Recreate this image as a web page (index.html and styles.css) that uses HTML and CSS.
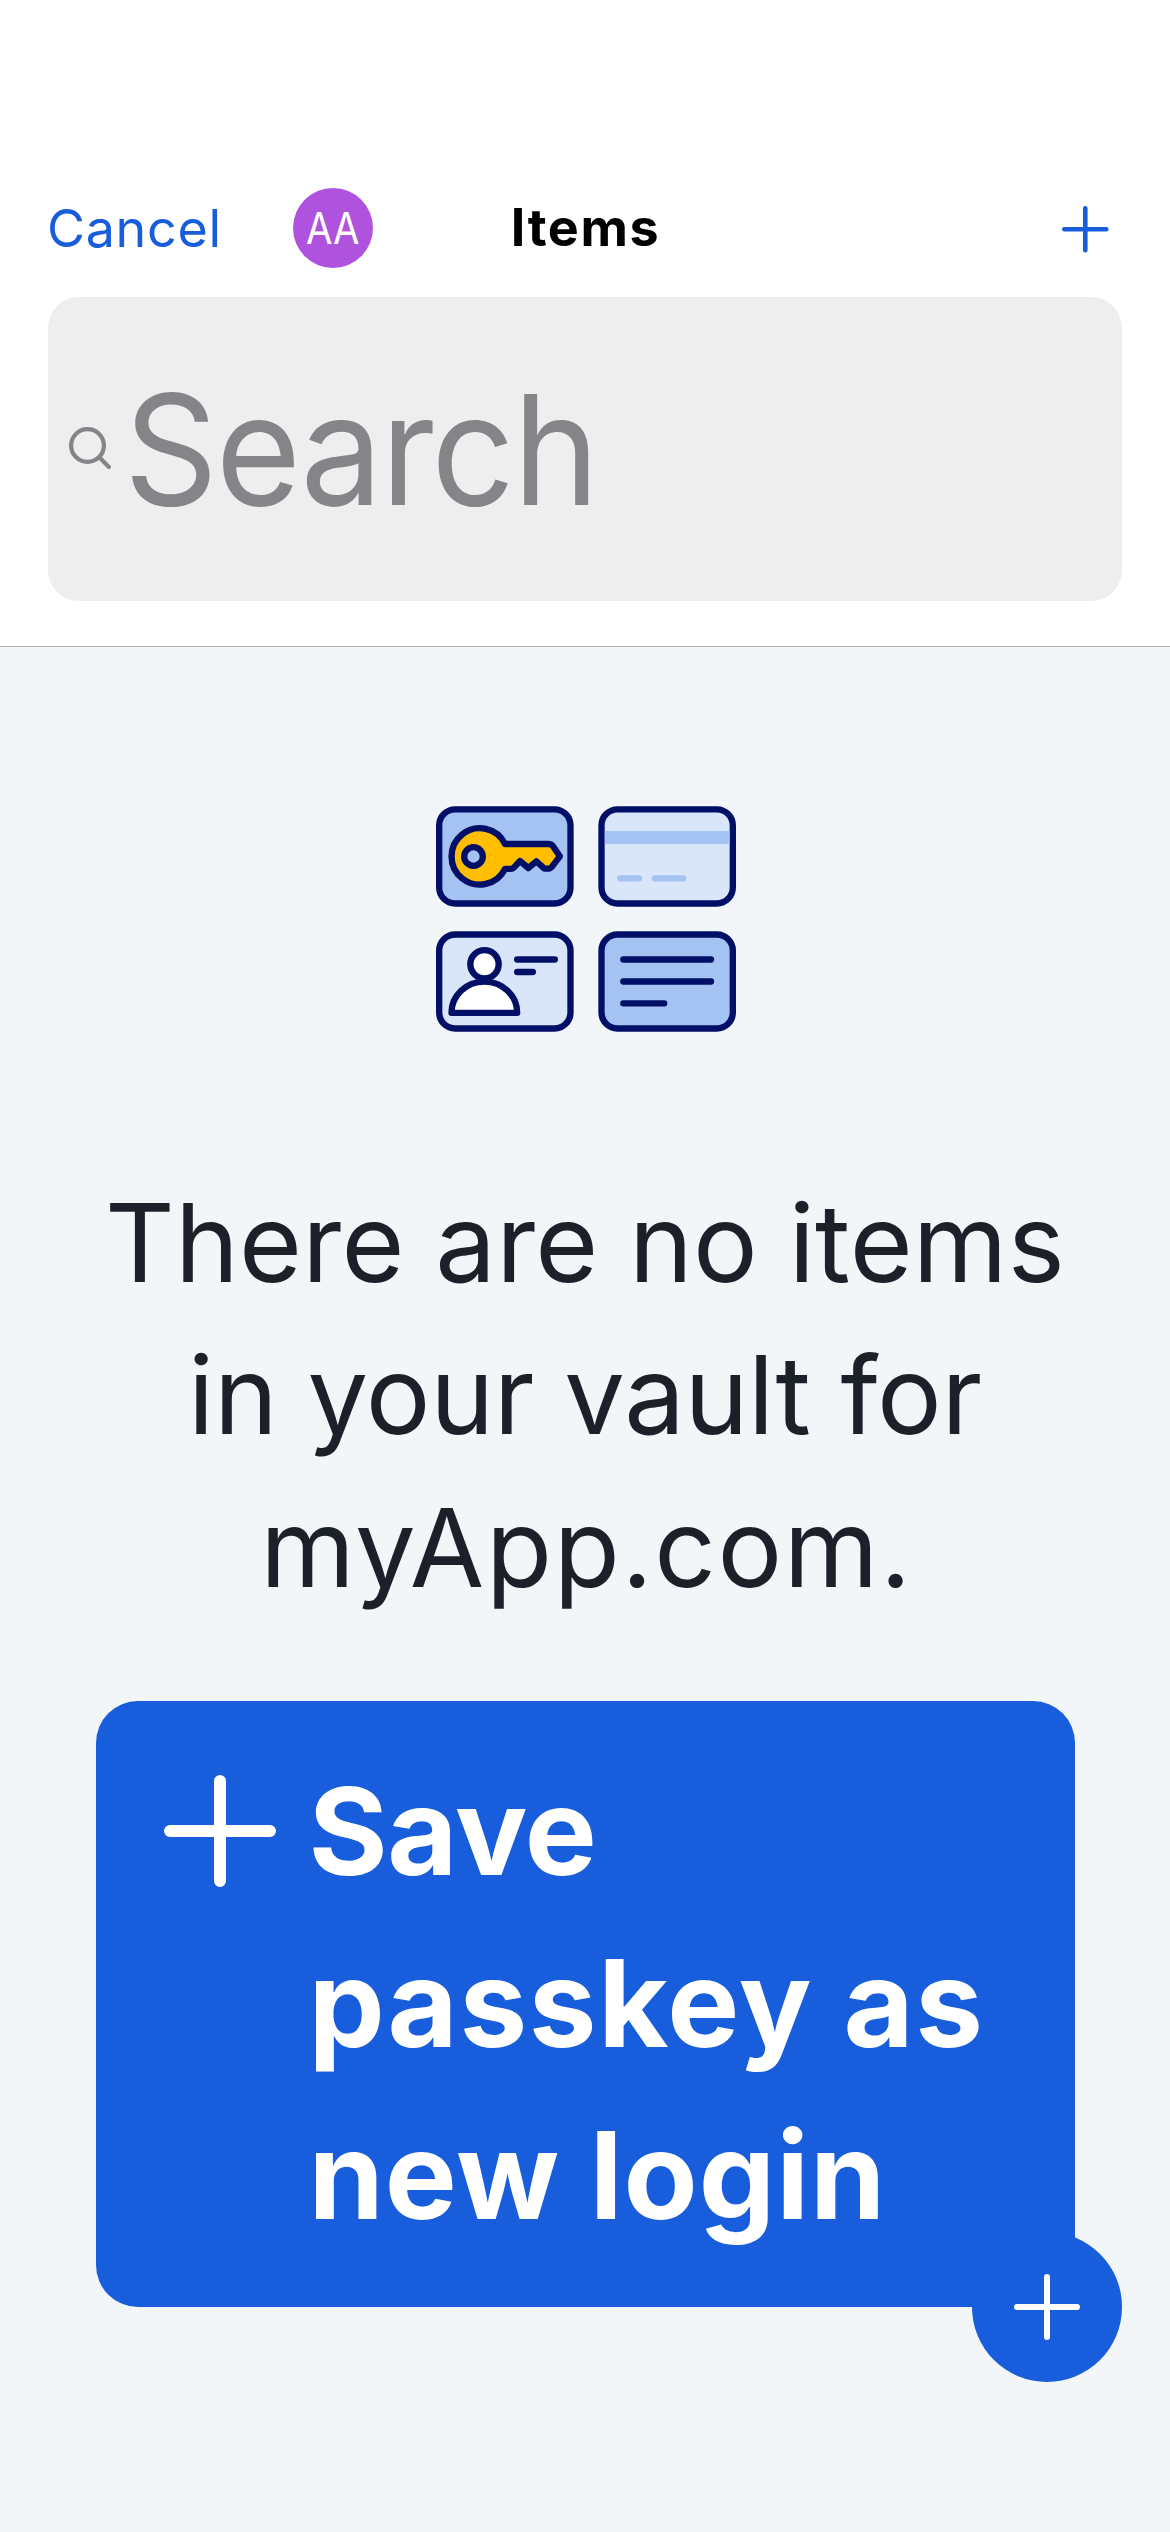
FILE: index.html
```html
<!DOCTYPE html>
<html lang="en">
<head>
  <meta charset="utf-8">
  <title>Items</title>
  <link rel="stylesheet" href="styles.css">
</head>
<body>
  <header class="header">
    <nav class="nav">
      <div class="nav-left">
        <a class="cancel">Cancel</a>
        <div class="avatar"><span class="initials">AA</span></div>
      </div>
      <h1 class="title">Items</h1>
      <svg class="nav-add" viewBox="0 0 47 47"><path d="M23.3 2.3v42M2.3 23.3h42"/></svg>
    </nav>
    <div class="search">
      <svg class="search-icon" viewBox="0 0 42 42"><circle cx="18.5" cy="18.5" r="16.4"/><path d="M30.3 30.3l9.6 9.6"/></svg>
      <span class="search-text">Search</span>
    </div>
  </header>
  <main class="main">
    <svg class="art" viewBox="45 48 900 678">
      <g class="outline">
        <rect class="mid" x="54.5" y="58" width="394" height="282.500" rx="48"/>
        <path class="gold" d="M252 162H384Q391 162 395 167L416.500 199L393 230Q388 236 380 236H374Q370 236 367 233L346 214L322 234L297 213L279 232Q275 236.500 269 236.500H252A84.500 84.500 0 1 1 252 162Z"/>
        <circle class="mid" cx="157.500" cy="199.500" r="28"/>
        <rect class="pale" x="541.500" y="58" width="394" height="282.500" rx="48"/>
        <rect class="pale" x="54.500" y="433.500" width="394" height="282" rx="48"/>
        <circle class="white" cx="190.500" cy="523" r="42.500"/>
        <path class="white" d="M91.500 668.500C91.500 617 135 575 190 575S288.500 617 288.500 668.500Z"/>
        <path d="M288.500 508.500H401.500M288.500 546H335.500"/>
        <rect class="mid" x="541.500" y="433.500" width="394" height="282" rx="48"/>
        <path d="M607 508.500H870M607 574.500H870M607 640H729.500"/>
      </g>
      <path class="stripe" d="M551.500 123H926V162H551.500Z"/>
      <path class="dashes" d="M597.500 265H654M701.500 265H786"/>
    </svg>
    <p class="message">
      <span class="line line-1">There are no items</span>
      <span class="line line-2">in your vault for</span>
      <span class="line line-3">myApp.com.</span>
    </p>
    <div class="save">
      <svg class="save-icon" viewBox="0 0 112 112"><path d="M56 6v100M6 56h100"/></svg>
      <div class="save-text">
        <span class="line save-1">Save</span>
        <span class="line save-2">passkey as</span>
        <span class="line save-3">new login</span>
      </div>
    </div>
  </main>
  <div class="fab">
    <svg class="fab-icon" viewBox="0 0 66 66"><path d="M33 3v60M3 33h60"/></svg>
  </div>
</body>
</html>
```
FILE: styles.css
```css
* { box-sizing: border-box; }
body {
  margin: 0;
  position: relative;
  width: 1170px;
  height: 2532px;
  overflow: hidden;
  display: flex;
  flex-direction: column;
  background: #f2f6f9;
  font-family: "Inter", "Liberation Sans", sans-serif;
}
svg { display: block; fill: none; stroke-linecap: round; stroke-linejoin: round; }

.header {
  height: 647px;
  padding: 188px 48px 0;
  background: #fff;
  border-bottom: 1px solid #abadb0;
}
.nav {
  display: grid;
  grid-template-columns: 1fr auto 1fr;
  align-items: center;
  height: 80px;
}
.nav-left { display: flex; align-items: center; }
.cancel {
  width: 245px;
  margin-left: -1px;
  font-size: 52px;
  letter-spacing: 0.7px;
  color: #175ddc;
}
.avatar {
  display: flex;
  align-items: center;
  justify-content: center;
  width: 80px;
  height: 80px;
  margin-left: 1px;
  border-radius: 50%;
  background: #af52de;
  color: #fff;
}
.initials { font-size: 44px; transform: scaleX(0.87); }
.title {
  margin: -1px 0 0 1px;
  font-size: 52px;
  font-weight: 700;
  letter-spacing: 1.6px;
  color: #000;
}
.nav-add {
  justify-self: end;
  width: 47px;
  height: 47px;
  margin: 2px 13px 0 0;
  stroke: #175ddc;
  stroke-width: 4.6;
}
.search {
  display: flex;
  align-items: center;
  gap: 13px;
  height: 304px;
  margin-top: 29px;
  padding-left: 21px;
  border-radius: 31px;
  background: #eeeeee;
}
.search-icon {
  width: 42px;
  height: 42px;
  margin-top: -2px;
  stroke: #858489;
  stroke-width: 4.2;
}
.search-text {
  font-size: 153px;
  letter-spacing: -2px;
  transform: scaleX(0.955);
  transform-origin: left;
  color: #858489;
}

.main {
  display: flex;
  flex-direction: column;
  align-items: center;
  padding-top: 159px;
}
.art { width: 300px; height: 226px; margin-left: 1px; }
.outline { stroke: #020f66; stroke-width: 19; }
.mid { fill: #a4c3f3; }
.pale { fill: #d9e5f9; }
.white { fill: #fff; }
.gold { fill: #ffbf00; }
.stripe { fill: #a4c3f3; }
.dashes { stroke: #a4c3f3; stroke-width: 19; }

.message {
  margin: 134.500px 0 0;
  font-size: 108px;
  line-height: 152.500px;
  text-align: center;
  color: #1b2029;
}
.line { display: block; white-space: nowrap; }
.line-1 { letter-spacing: 0.24px; }
.line-2 { letter-spacing: -0.3px; }
.line-3 { padding-left: 3px; letter-spacing: 1.6px; }

.save {
  display: flex;
  gap: 33px;
  width: 979px;
  height: 605.500px;
  margin-top: 77px;
  padding: 44px 0 0 68px;
  border-radius: 42px;
  background: #175ddc;
  color: #fff;
  align-items: flex-start;
}
.save-icon {
  flex: none;
  width: 112px;
  height: 112px;
  margin-top: 30px;
  stroke: #fff;
  stroke-width: 12;
}
.save-text { font-size: 121px; font-weight: 700; line-height: 172px; }
.save-1 { letter-spacing: -0.5px; }
.save-2 { letter-spacing: 1.6px; }
.save-3 { letter-spacing: 1px; }

.fab {
  position: absolute;
  right: 48px;
  bottom: 150px;
  display: flex;
  align-items: center;
  justify-content: center;
  width: 150px;
  height: 150px;
  border-radius: 50%;
  background: #175ddc;
}
.fab-icon { width: 66px; height: 66px; stroke: #fff; stroke-width: 6; }
```
